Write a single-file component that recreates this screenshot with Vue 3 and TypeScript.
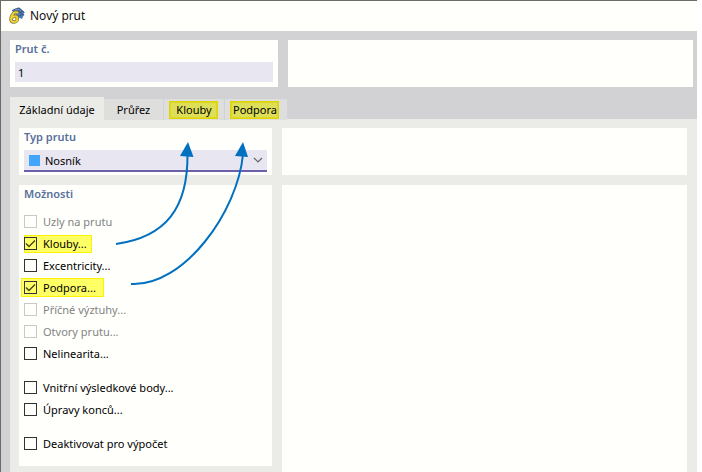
<script setup lang="ts">
import { ref } from 'vue'

interface Option {
  id: string
  label: string
  checked: boolean
  disabled?: boolean
  mark?: string
}

const memberNo = ref('1')
const memberType = ref('Nosník')
const activeTab = ref('Základní údaje')

const tabs = [
  { label: 'Základní údaje', cls: 'tab-main' },
  { label: 'Průřez', cls: 'tab-section' },
  { label: 'Klouby', cls: 'tab-hinges', mark: true },
  { label: 'Podpora', cls: 'tab-support', mark: true },
]

const groups = ref<Option[][]>([
  [
    { id: 'nodes', label: 'Uzly na prutu', checked: false, disabled: true },
    { id: 'hinges', label: 'Klouby...', checked: true, mark: 'mark-hinges' },
    { id: 'ecc', label: 'Excentricity...', checked: false },
    { id: 'support', label: 'Podpora...', checked: true, mark: 'mark-support' },
    { id: 'stiff', label: 'Příčné výztuhy...', checked: false, disabled: true },
    { id: 'openings', label: 'Otvory prutu...', checked: false, disabled: true },
    { id: 'nonlin', label: 'Nelinearita...', checked: false },
  ],
  [
    { id: 'points', label: 'Vnitřní výsledkové body...', checked: false },
    { id: 'ends', label: 'Úpravy konců...', checked: false },
  ],
  [{ id: 'deactivate', label: 'Deaktivovat pro výpočet', checked: false }],
])
</script>

<template>
  <div class="page">
    <main class="window">
      <header class="titlebar">
        <svg class="logo" width="18" height="18" viewBox="0 0 18 18" aria-hidden="true">
          <path d="M4 3.500 7 1.500 11 .5 16.500 5 15.500 6.500 16.500 8 15 9.500 14 12 10.500 10.500z" fill="#4c7cba" />
          <path d="M4 3.500 11 1l5.500 4.500M8 2l7 5.500M11 .8l1.500 5M8.500 6l6-2M11 9l4.500-2" fill="none" stroke="#33486e" stroke-width=".7" />
          <path d="M7 3l3-1 3 2.500" fill="none" stroke="#8fb0da" stroke-width=".8" />
          <path d="M10 6.200C9 4.800 6.600 4.900 5.300 6.500 4 8 3 10 3 12c0 2 1.200 3 2.900 3 2 0 3.500-1.400 3.500-3.300 0-1.500-1-2.400-2.500-2.400-1.600 0-2.900.9-3.600 2.200" fill="none" stroke="#6f6a38" stroke-width="3.400" />
          <path d="M10 6.200C9 4.800 6.600 4.900 5.300 6.500 4 8 3 10 3 12c0 2 1.200 3 2.900 3 2 0 3.500-1.400 3.500-3.300 0-1.500-1-2.400-2.500-2.400-1.600 0-2.900.9-3.600 2.200" fill="none" stroke="#eed232" stroke-width="2" />
        </svg>
        <h1>Nový prut</h1>
      </header>

      <section class="top">
        <div class="card field-card">
          <label class="caption" for="member-no">Prut č.</label>
          <input id="member-no" v-model="memberNo" class="text-field" type="text" />
        </div>
        <div class="card"></div>
      </section>

      <nav class="tabs" role="tablist">
        <button
          v-for="t in tabs"
          :key="t.label"
          type="button"
          role="tab"
          class="tab"
          :class="[t.cls, { active: activeTab === t.label }]"
          :aria-selected="activeTab === t.label"
          @click="activeTab = t.label"
        >
          <span class="tab-text" :class="{ marked: t.mark }">{{ t.label }}</span>
        </button>
      </nav>

      <section class="content">
        <div class="column">
          <div class="card field-card">
            <label class="caption" for="member-type">Typ prutu</label>
            <div class="select-wrap">
              <span class="swatch"></span>
              <select id="member-type" v-model="memberType">
                <option>Nosník</option>
              </select>
              <svg class="chevron" width="10" height="6" viewBox="0 0 10 6" aria-hidden="true">
                <path d="M1 1l4 4 4-4" fill="none" stroke="#666" stroke-width="1.200" />
              </svg>
            </div>
          </div>

          <div class="card options">
            <h2 class="caption">Možnosti</h2>
            <div v-for="(group, i) in groups" :key="i" class="group">
              <label
                v-for="o in group"
                :key="o.id"
                class="option"
                :class="[o.mark, { disabled: o.disabled }]"
                :for="o.id"
              >
                <input :id="o.id" v-model="o.checked" type="checkbox" :disabled="o.disabled" />
                <span>{{ o.label }}</span>
                <svg v-if="o.checked" class="tick" width="13" height="13" viewBox="0 0 13 13" aria-hidden="true">
                  <path d="M2 6.500l3 3L11 3.500" fill="none" stroke="#45451a" stroke-width="1.400" />
                </svg>
              </label>
            </div>
          </div>
        </div>

        <div class="column">
          <div class="card side-head"></div>
          <div class="card side-body"></div>
        </div>
      </section>

      <svg class="arrows" width="290" height="300" viewBox="0 0 290 300" aria-hidden="true">
        <g fill="none" stroke="#0070c0" stroke-width="2">
          <path d="M116 244C166 237 188 208 187.500 154" />
          <path d="M131 284C184 287 238 211 243 154" />
        </g>
        <path d="M188 142l5.500 15-13.500-1z" fill="#0070c0" />
        <path d="M243 142l5 15-13-1z" fill="#0070c0" />
      </svg>
    </main>
  </div>
</template>

<style>
body {
  background: #fff;
}
</style>

<style scoped>
.page {
  box-sizing: border-box;
  height: 100vh;
  padding-right: 5px;
  overflow: hidden;
  font-family: 'Noto Sans', 'Open Sans', sans-serif;
  font-size: 11px;
  line-height: 16px;
  color: #000;
}

.window {
  position: relative;
  box-sizing: border-box;
  display: flex;
  flex-direction: column;
  height: 100%;
  border-top: 1px solid #6b6b6b;
  border-left: 1px solid #6b6b6b;
  background: #d2d2d4;
}

.titlebar {
  display: flex;
  flex-shrink: 0;
  align-items: center;
  gap: 4px;
  height: 30px;
  padding-left: 7px;
  background: #fffffc;
}

h1 {
  margin: 0;
  font-family: 'Open Sans', 'Noto Sans', sans-serif;
  font-size: 12px;
  font-weight: 400;
}

.top {
  display: grid;
  flex-shrink: 0;
  grid-template-columns: 268px 1fr;
  gap: 10px;
  padding: 9px 4px 10px 9px;
}

.card {
  background: #fffffc;
}

.field-card {
  box-sizing: border-box;
  height: 47px;
  padding: 1px 5px 0;
}

.caption {
  display: block;
  margin: 0 0 5px;
  font-size: 11px;
  font-weight: 600;
  line-height: 16px;
  color: #566f9b;
}

.text-field {
  display: block;
  box-sizing: border-box;
  width: 100%;
  height: 20px;
  padding: 1px 3px 0;
  border: 0;
  background: #e7e6f1;
  font: inherit;
  color: #000;
}

.tabs {
  display: flex;
  flex-shrink: 0;
  align-items: flex-start;
  height: 22px;
  padding-left: 9px;
}

.tab {
  position: relative;
  box-sizing: border-box;
  height: 21px;
  margin: 2px 0 0;
  padding: 0;
  border: 0;
  border-right: 1px solid #d2d2d4;
  background: #dededd;
  font: inherit;
  color: #000;
}

.tab.active {
  height: 22px;
  margin-top: 0;
  padding-top: 3px;
  border-right: 0;
  background: #ebece8;
}

.tab-main {
  width: 94px;
}

.tab-section {
  width: 60px;
}

.tab-hinges {
  width: 61px;
}

.tab-support {
  width: 62px;
  border-right: 0;
}

.tab-hinges,
.tab-support {
  padding-left: 5px;
  text-align: left;
}

.tab-text {
  display: inline-block;
}

.marked {
  box-sizing: border-box;
  width: 49px;
  height: 18px;
  padding-left: 1px;
  border: 1px solid #e0d500;
  outline: 1px solid #dfd822;
  outline-offset: -2px;
  background: #dddf58;
  text-align: center;
  white-space: nowrap;
}

.content {
  display: grid;
  flex: 1;
  grid-template-columns: 253px 1fr;
  gap: 10px;
  margin-left: 9px;
  padding: 9px 10px 0 9px;
  background: #ebece8;
}

.column {
  display: flex;
  flex-direction: column;
  gap: 10px;
}

.select-wrap {
  position: relative;
  display: flex;
  align-items: center;
}

select {
  box-sizing: border-box;
  width: 100%;
  height: 22px;
  padding: 1px 20px 0 21px;
  border: 0;
  border-bottom: 2px solid #6d5fa9;
  border-radius: 0;
  background: #e7e6f1;
  font: inherit;
  color: #000;
  appearance: none;
}

.swatch {
  position: absolute;
  top: 5px;
  left: 5px;
  width: 11px;
  height: 11px;
  background: #42a5ff;
}

.chevron {
  position: absolute;
  top: 7px;
  right: 4px;
}

.options {
  flex: 1;
  margin-bottom: 6px;
  padding: 1px 5px 0;
}

.options .caption {
  margin-bottom: 8px;
}

.group {
  margin-bottom: 12px;
}

.option {
  position: relative;
  isolation: isolate;
  box-sizing: border-box;
  display: flex;
  align-items: center;
  gap: 6px;
  height: 22px;
  padding-top: 1px;
}

.option input {
  box-sizing: border-box;
  width: 13px;
  height: 13px;
  margin: 0;
  border: 1px solid #333;
  background: #fffffc;
  appearance: none;
}

.tick {
  position: absolute;
  top: 5px;
  left: 0;
}

.disabled {
  color: #838383;
}

.disabled input {
  border-color: #c8c8c8;
}

.mark-hinges input,
.mark-support input {
  background: transparent;
}

.mark-hinges::before,
.mark-support::before {
  position: absolute;
  z-index: -1;
  box-sizing: border-box;
  border: 1px solid #fff200;
  background: #ffff66;
  content: '';
}

.mark-hinges::before {
  top: 3px;
  left: 0;
  width: 68px;
  height: 18px;
}

.mark-support::before {
  top: 2px;
  left: -3px;
  width: 83px;
  height: 19px;
}

.side-head {
  height: 47px;
}

.side-body {
  flex: 1;
}

.arrows {
  position: absolute;
  top: -1px;
  left: -1px;
  pointer-events: none;
}
</style>
